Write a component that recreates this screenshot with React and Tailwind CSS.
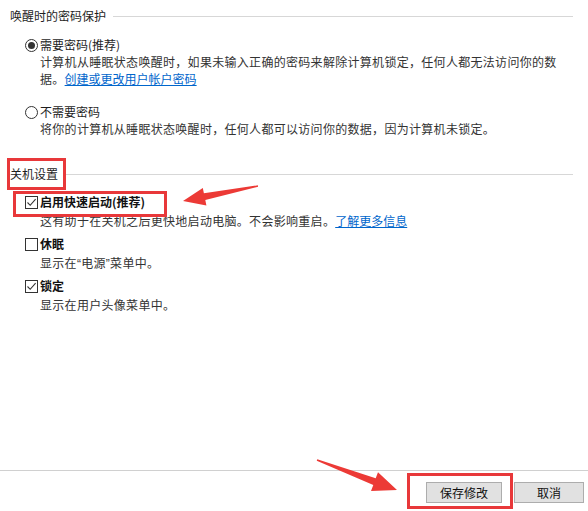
import React from "react";

const FONT = { fontFamily: '"Noto Sans CJK SC", "Noto Sans", sans-serif' };

function Radio({ checked }) {
  return (
    <span className="w-[13px] h-[13px] rounded-full border border-[#333] flex items-center justify-center shrink-0 bg-white">
      {checked && <span className="w-[7px] h-[7px] rounded-full bg-[#333]" />}
    </span>
  );
}

function Check({ checked }) {
  return (
    <span className="w-[13px] h-[13px] border border-[#333] flex items-center justify-center shrink-0 bg-white">
      {checked && (
        <svg width="11" height="11" viewBox="0 0 11 11">
          <path d="M1.5 5.5 L4.2 8.3 L9.6 2.2" fill="none" stroke="#333" strokeWidth="1.1" />
        </svg>
      )}
    </span>
  );
}

function SectionTitle({ children, gap }) {
  return (
    <div className="flex items-center text-[12px] leading-[16px] text-[#1e1e1e]">
      <span>{children}</span>
      <span className={`flex-1 h-px bg-[#d7d7d7] mr-[5px] ${gap}`} />
    </div>
  );
}

function CheckItem({ checked, title, children, className = "" }) {
  return (
    <div className={`pl-[15px] ${className}`}>
      <div className="flex items-center gap-[2px] leading-[16px] text-[12px] font-bold text-[#111]">
        <Check checked={checked} />
        <span>{title}</span>
      </div>
      <div className="pl-[15px] mt-[2px] leading-[18px] text-[12px] text-[#333] tracking-[0.3px]">
        {children}
      </div>
    </div>
  );
}

const Q = ({ children }) => (
  <span style={{ fontFamily: '"Liberation Sans", sans-serif' }}>{children}</span>
);

export default function App() {
  return (
    <div className="relative w-[588px] h-[511px] bg-white overflow-hidden flex flex-col" style={FONT}>
      <div className="px-[10px] pt-[8px]">
        {/* 唤醒时的密码保护 */}
        <SectionTitle gap="ml-[7px]">唤醒时的密码保护</SectionTitle>

        <div className="pl-[15px] mt-[13px]">
          <div className="flex items-center gap-[2px] leading-[16px] text-[12px] text-[#1e1e1e]">
            <Radio checked />
            <span>需要密码(推荐)</span>
          </div>
          <div className="pl-[15px] leading-[17px] text-[12px] text-[#333] tracking-[0.3px]">
            计算机从睡眠状态唤醒时，如果未输入正确的密码来解除计算机锁定，任何人都无法访问你的数
            <br />
            据。<a className="text-[#0066cc] underline tracking-normal">创建或更改用户帐户密码</a>
          </div>
        </div>

        <div className="pl-[15px] mt-[17px]">
          <div className="flex items-center gap-[2px] leading-[16px] text-[12px] text-[#1e1e1e]">
            <Radio />
            <span>不需要密码</span>
          </div>
          <div className="pl-[15px] leading-[17px] text-[12px] text-[#333] tracking-[0.3px]">
            将你的计算机从睡眠状态唤醒时，任何人都可以访问你的数据，因为计算机未锁定。
          </div>
        </div>

        {/* 关机设置 */}
        <div className="mt-[29px]">
          <SectionTitle gap="ml-[6px]">关机设置</SectionTitle>
        </div>

        <CheckItem checked title="启用快速启动(推荐)" className="mt-[12px]">
          这有助于在关机之后更快地启动电脑。不会影响重启。
          <a className="text-[#0066cc] underline tracking-normal">了解更多信息</a>
        </CheckItem>
        <CheckItem title="休眠" className="mt-[6px]">
          显示在<Q>“</Q>电源<Q>”</Q>菜单中。
        </CheckItem>
        <CheckItem checked title="锁定" className="mt-[5px]">
          显示在用户头像菜单中。
        </CheckItem>
      </div>

      {/* footer */}
      <div className="mt-auto h-[41px] border-t border-[#d0d0d0] flex justify-end gap-[12px] pt-[11px] pr-[4px]">
        <button className="w-[76px] h-[21px] bg-[#e1e1e1] border border-[#adadad] text-[12px] leading-[19px] text-[#111]">
          保存修改
        </button>
        <button className="w-[70px] h-[21px] bg-[#e1e1e1] border border-[#adadad] text-[12px] leading-[19px] text-[#111]">
          取消
        </button>
      </div>

      {/* annotation boxes */}
      <div className="absolute left-[7px] top-[158px] w-[59px] h-[32px] border-[3px] border-[#e8383a] pointer-events-none" />
      <div className="absolute left-[13px] top-[191px] w-[154px] h-[26px] border-[3px] border-[#e8383a] pointer-events-none" />
      <div className="absolute left-[407px] top-[473px] w-[106px] h-[36px] border-[3px] border-[#e8383a] pointer-events-none" />

      {/* annotation arrows */}
      <svg className="absolute inset-0 pointer-events-none" width="588" height="511" viewBox="0 0 588 511">
        <polygon
          fill="#ec3a36"
          points="183,201 206.4,205.5 205.3,200.1 258.1,186.7 257.9,185.3 203.9,193.3 202.8,187.9"
        />
        <polygon
          fill="#ec3a36"
          points="397,490 371,491 373.3,484.9 316.75,460.66 317.25,459.34 375.7,478.3 378,472.2"
        />
      </svg>
    </div>
  );
}
